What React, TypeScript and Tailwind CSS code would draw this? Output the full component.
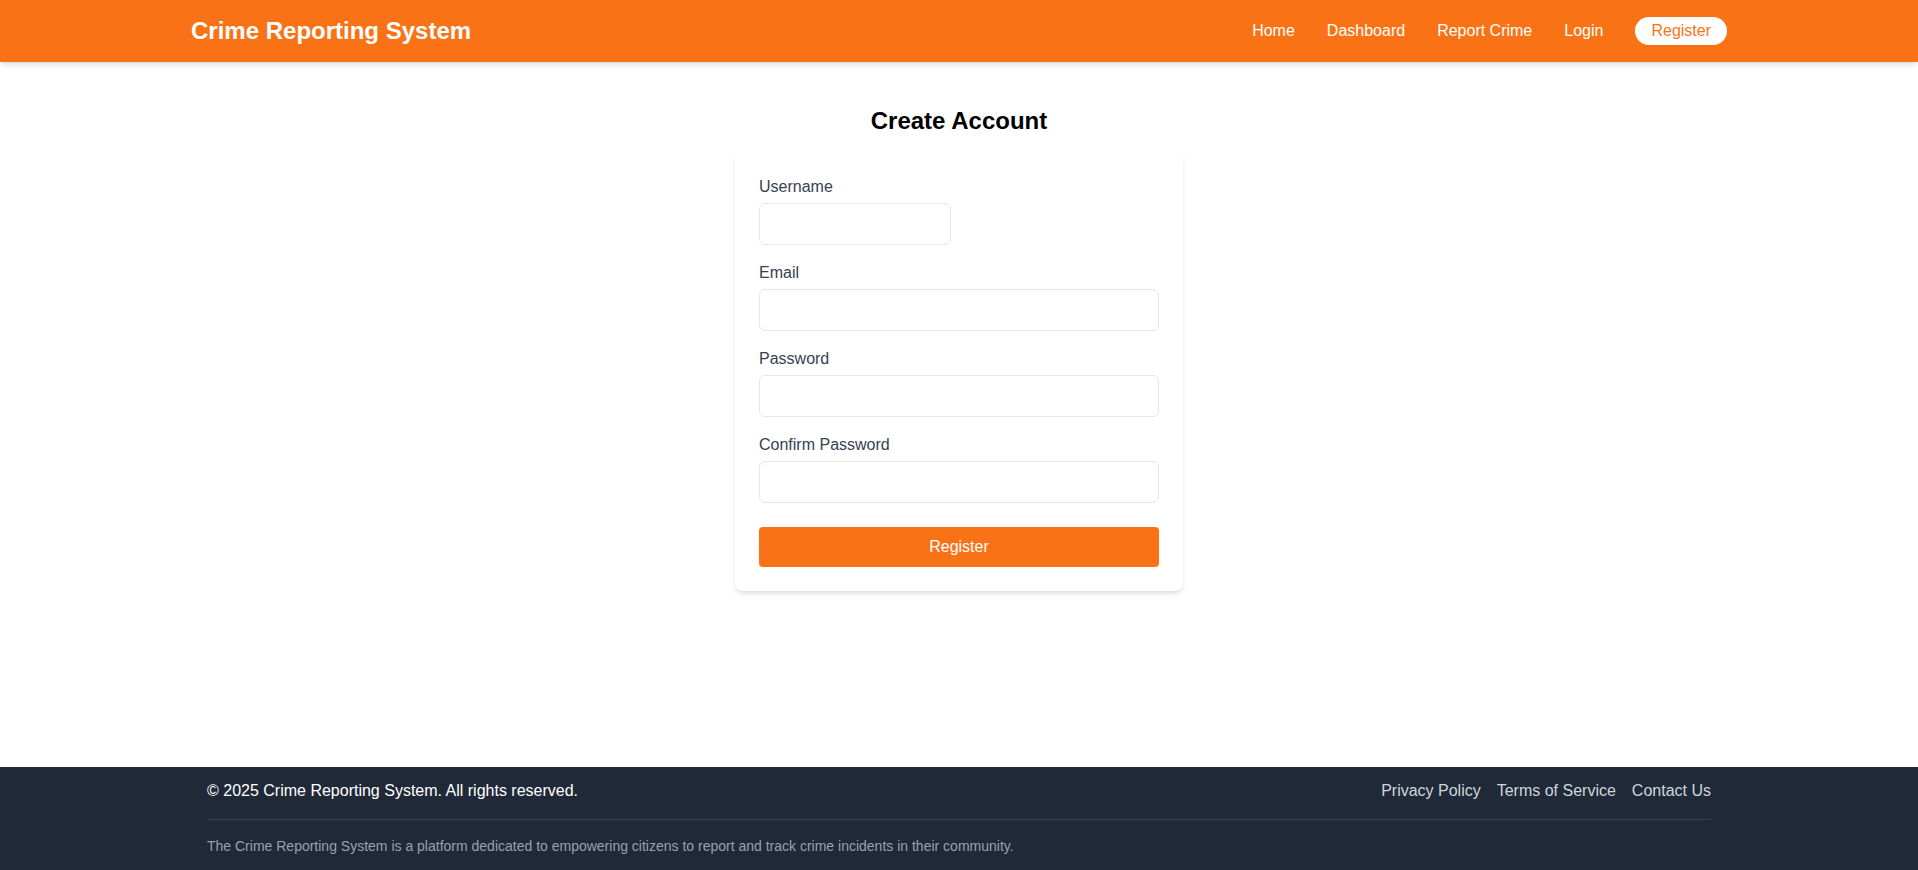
const navLinks = ["Home", "Dashboard", "Report Crime", "Login"];

const fields = [
  { id: "email", label: "Email", type: "email" },
  { id: "password", label: "Password", type: "password" },
  { id: "confirm", label: "Confirm Password", type: "password" },
];

function Header() {
  return (
    <header className="bg-[#f97316] shadow-md">
      <div className="container mx-auto flex items-center justify-between py-[15px]">
        <h1 className="text-2xl font-bold text-white">Crime Reporting System</h1>
        <nav className="flex items-center gap-8 text-base text-white">
          {navLinks.map((link) => (
            <a key={link} href="#" className="hover:underline">
              {link}
            </a>
          ))}
          <a
            href="#"
            className="rounded-full bg-white px-4 py-0.5 text-[#f97316]"
          >
            Register
          </a>
        </nav>
      </div>
    </header>
  );
}

function Footer() {
  return (
    <footer className="bg-[#1f2937] pt-3 pb-[14px] text-white">
      <div className="container mx-auto px-4">
        <div className="flex items-center justify-between">
          <p className="text-base">
            © 2025 Crime Reporting System. All rights reserved.
          </p>
          <div className="flex gap-4 text-base text-gray-300">
            <a href="#">Privacy Policy</a>
            <a href="#">Terms of Service</a>
            <a href="#">Contact Us</a>
          </div>
        </div>
        <div className="mt-4 border-t border-[#374151] pt-4">
          <p className="text-sm text-gray-400">
            The Crime Reporting System is a platform dedicated to empowering
            citizens to report and track crime incidents in their community.
          </p>
        </div>
      </div>
    </footer>
  );
}

export default function App() {
  return (
    <div className="flex min-h-screen flex-col bg-white font-['Liberation_Sans',Arial,sans-serif]">
      <Header />

      <main className="flex-1 pt-[43px]">
        <h2 className="mb-[14px] text-center text-2xl font-bold text-black">
          Create Account
        </h2>

        <form className="mx-auto max-w-md rounded-lg bg-white p-6 shadow-md">
          <div className="mb-4">
            <label htmlFor="username" className="mb-1 block text-base text-gray-700">
              Username
            </label>
            <input
              id="username"
              type="text"
              className="w-48 rounded-md border border-gray-200 px-3 py-2 text-base"
            />
          </div>

          {fields.map((field, i) => (
            <div key={field.id} className={i === fields.length - 1 ? "mb-6" : "mb-4"}>
              <label htmlFor={field.id} className="mb-1 block text-base text-gray-700">
                {field.label}
              </label>
              <input
                id={field.id}
                type={field.type}
                className="w-full rounded-md border border-gray-200 px-3 py-2 text-base"
              />
            </div>
          ))}

          <button
            type="button"
            className="w-full rounded bg-[#f97316] py-2 text-base text-white"
          >
            Register
          </button>
        </form>
      </main>

      <Footer />
    </div>
  );
}
